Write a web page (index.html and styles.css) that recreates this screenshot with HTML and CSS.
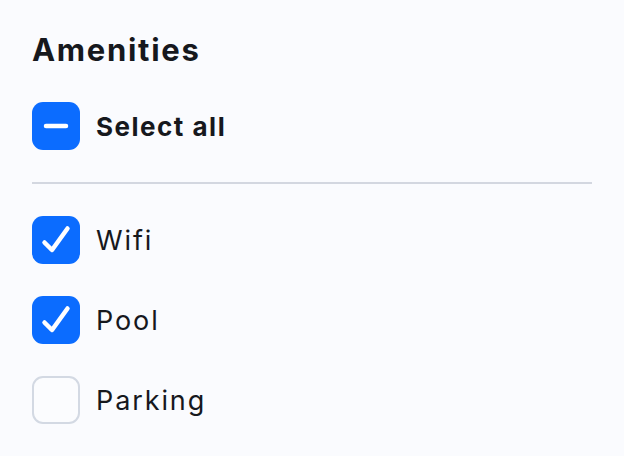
FILE: index.html
```html
<!DOCTYPE html>
<html>
	<head>
		<title>Amenities</title>
		<link rel="stylesheet" href="styles.css">
	</head>
	<body>
		<div class="filter">
			<h2 class="filter-title">Amenities</h2>

			<label class="option option-all">
				<span class="box box-on">
					<svg viewBox="0 0 48 48" width="48" height="48"><path d="M14 24 H34" /></svg>
				</span>
				<span class="option-text">Select all</span>
			</label>

			<hr class="divider">

			<div class="list">
				<label class="option">
					<span class="box box-on">
						<svg viewBox="0 0 48 48" width="48" height="48"><path d="M12.5 26.5 L20 34 L35.5 12.5" /></svg>
					</span>
					<span class="option-text">Wifi</span>
				</label>
				<label class="option">
					<span class="box box-on">
						<svg viewBox="0 0 48 48" width="48" height="48"><path d="M12.5 26.5 L20 34 L35.5 12.5" /></svg>
					</span>
					<span class="option-text">Pool</span>
				</label>
				<label class="option">
					<span class="box box-off"></span>
					<span class="option-text">Parking</span>
				</label>
			</div>
		</div>
	</body>
</html>
```

FILE: styles.css
```css
* {
	box-sizing: border-box;
}

body {
	margin: 0;
	background-color: #fafbfe;
	color: #16181d;
	font-family: "Inter", "Noto Sans", sans-serif;
}

.filter {
	width: 560px;
	margin-left: 32px;
	padding-top: 30px;
}

.filter-title {
	margin: 0 0 32px 0;
	font-size: 31px;
	line-height: 40px;
	font-weight: 700;
	letter-spacing: 1.7px;
}

.option {
	display: flex;
	align-items: center;
	gap: 16px;
	height: 48px;
}

.option-text {
	font-size: 27px;
	letter-spacing: 1.9px;
}

.option-all .option-text {
	font-weight: 700;
	font-size: 26px;
	letter-spacing: 1.5px;
}

.box {
	width: 48px;
	height: 48px;
	border-radius: 11px;
	flex-shrink: 0;
}

.box-on {
	background-color: #0b6cff;
}

.box-on svg {
	display: block;
	fill: none;
	stroke: white;
	stroke-width: 4.5;
	stroke-linecap: round;
	stroke-linejoin: round;
}

.box-off {
	border: 2px solid #d3d9e3;
	background-color: #fbfcfe;
}

.divider {
	border: none;
	height: 2px;
	background-color: #d3d7e0;
	margin: 32px 0;
}

.list {
	display: flex;
	flex-direction: column;
	gap: 32px;
}
```
